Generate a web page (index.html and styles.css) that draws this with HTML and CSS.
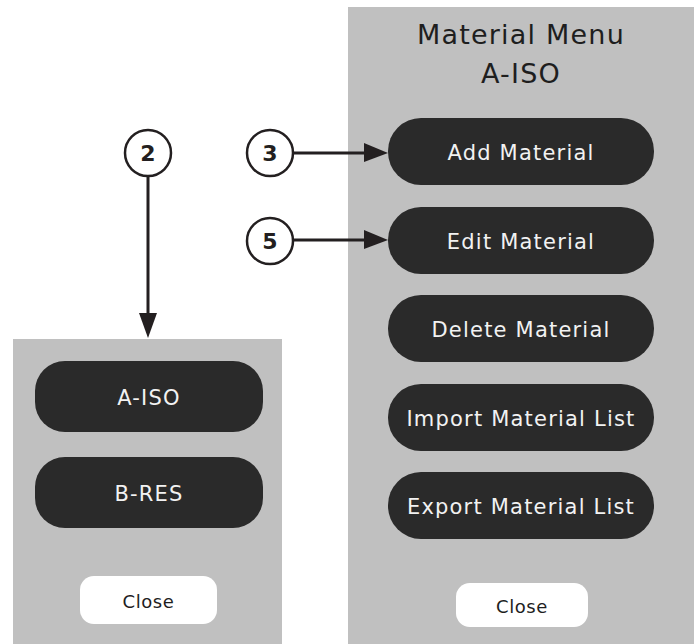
FILE: index.html
```html
<!DOCTYPE html>
<html lang="en">
<head>
  <meta charset="UTF-8" />
  <meta name="viewport" content="width=device-width, initial-scale=1.0"/>
  <title>Material Menu</title>
  <link rel="stylesheet" href="styles.css">
</head>
<body>
  <div class="stage">
    <!-- Material picker -->
    <div class="panel picker">
      <button class="btn">A-ISO</button>
      <button class="btn">B-RES</button>
      <button class="close">Close</button>
    </div>

    <!-- Material menu -->
    <div class="panel menu">
      <h2 class="title">Material Menu<br>A-ISO</h2>
      <button class="btn">Add Material</button>
      <button class="btn">Edit Material</button>
      <button class="btn">Delete Material</button>
      <button class="btn">Import Material List</button>
      <button class="btn">Export Material List</button>
      <button class="close">Close</button>
    </div>

    <!-- Callouts -->
    <svg class="callouts" width="694" height="644" viewBox="0 0 694 644">
      <g fill="none" stroke="#231f20" stroke-width="2.5">
        <circle cx="148" cy="153" r="23" />
        <circle cx="270" cy="153" r="23" />
        <circle cx="270" cy="241" r="23" />
      </g>
      <g stroke="#231f20" stroke-width="3">
        <line x1="148" y1="176" x2="148" y2="316" />
        <line x1="293" y1="153" x2="366" y2="153" />
        <line x1="293" y1="240" x2="366" y2="240" />
      </g>
      <g fill="#231f20">
        <polygon points="139,313 157,313 148,338" />
        <polygon points="364,143 364,162 388,153" />
        <polygon points="364,230 364,249 388,240" />
      </g>
      <g class="num" text-anchor="middle">
        <text x="148" y="161">2</text>
        <text x="270" y="161">3</text>
        <text x="270" y="249">5</text>
      </g>
    </svg>
  </div>
</body>
</html>
```

FILE: styles.css
```css
body {
  margin: 0;
  background: white;
  font-family: 'DejaVu Sans', sans-serif;
}
.stage {
  position: relative;
  width: 694px;
  height: 644px;
  display: flex;
  align-items: flex-end;
}
.panel {
  background-color: #c0c0c0;
  display: flex;
  flex-direction: column;
  align-items: center;
  box-sizing: border-box;
}
.picker {
  width: 269px;
  height: 305px;
  margin-left: 13px;
  padding-top: 22px;
  gap: 25px;
}
.menu {
  width: 346px;
  height: 637px;
  margin-left: 66px;
  padding-top: 8px;
  gap: 21.5px;
}
.title {
  margin: 0 0 3.5px;
  font-size: 27px;
  font-weight: normal;
  line-height: 39px;
  text-align: center;
  color: #1e1e1e;
  letter-spacing: 1.2px;
}
.btn {
  width: 266px;
  height: 67px;
  border: none;
  border-radius: 33px;
  background-color: #2a2a2a;
  color: #f2f2f2;
  font-family: inherit;
  font-size: 21px;
  letter-spacing: 1.2px;
  padding: 3px 0 0;
  cursor: pointer;
}
.picker .btn {
  width: 228px;
  height: 71px;
  border-radius: 30px;
  margin-left: 3px;
}
.close {
  width: 132px;
  height: 44px;
  border: none;
  border-radius: 14px;
  background: white;
  color: #1e1e1e;
  font-family: inherit;
  font-size: 18px;
  letter-spacing: 0.6px;
  padding: 2px 0 0;
  cursor: pointer;
}
.menu .close {
  margin-top: 22.5px;
  margin-left: 2px;
}
.picker .close {
  width: 137px;
  height: 48px;
  margin-top: 23px;
  margin-left: 2px;
}
.callouts {
  position: absolute;
  left: 0;
  top: 0;
  pointer-events: none;
}
.num text {
  font-family: 'DejaVu Sans', sans-serif;
  font-weight: bold;
  font-size: 22px;
  fill: #231f20;
}
```
